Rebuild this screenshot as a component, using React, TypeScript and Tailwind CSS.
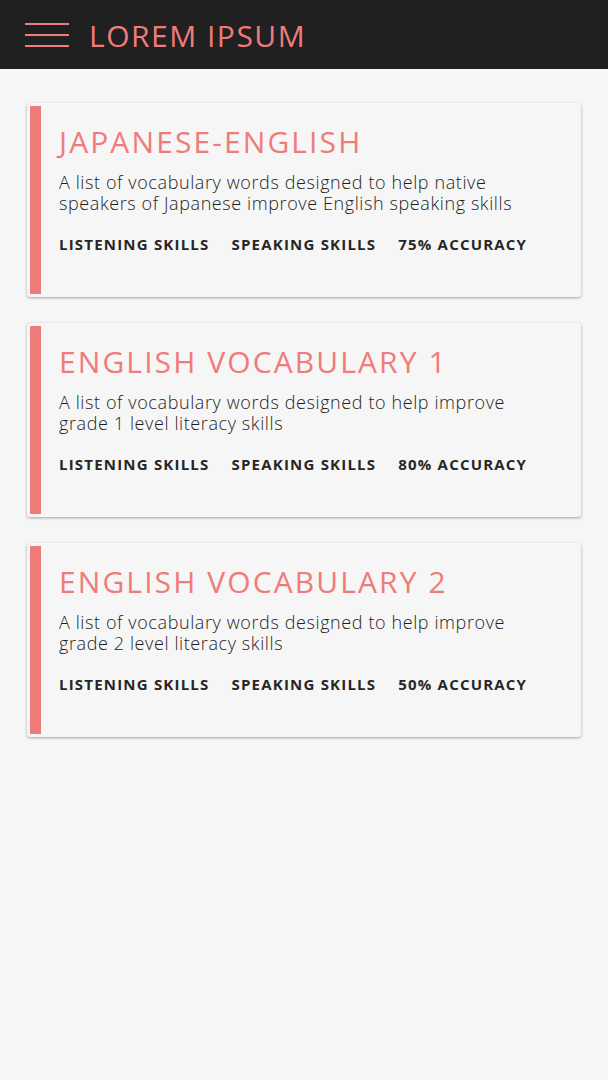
import React from 'react'

interface Course {
  title: string
  description: string
  accuracy: string
}

const courses: Course[] = [
  {
    title: 'JAPANESE-ENGLISH',
    description: 'A list of vocabulary words designed to help native speakers of Japanese improve English speaking skills',
    accuracy: '75% ACCURACY',
  },
  {
    title: 'ENGLISH VOCABULARY 1',
    description: 'A list of vocabulary words designed to help improve grade 1 level literacy skills',
    accuracy: '80% ACCURACY',
  },
  {
    title: 'ENGLISH VOCABULARY 2',
    description: 'A list of vocabulary words designed to help improve grade 2 level literacy skills',
    accuracy: '50% ACCURACY',
  },
]

const font = { fontFamily: '"Open Sans", "DejaVu Sans", sans-serif' }

const CourseCard = ({ course }: { course: Course }) => (
  <div className="flex h-[194px] rounded-[3px] bg-[#f6f6f6] p-[3px] shadow-[0_1px_3px_rgba(0,0,0,0.35)]">
    <div className="w-[11px] shrink-0 bg-[#ef7b7b]" />
    <div className="flex-1 pl-[18px] pr-[28px] pt-[18px]">
      <h2 className="text-[30px] leading-[36px] tracking-[2.1px] text-[#ef7b7b]">{course.title}</h2>
      <p className="mt-[12px] text-[18px] font-light leading-[21px] tracking-[0.6px] text-[#1e1e1e]">{course.description}</p>
      <div className="mt-[20px] flex gap-[22px] text-[15px] font-bold leading-[20px] tracking-[1.2px] text-[#262626]">
        <span>LISTENING SKILLS</span>
        <span>SPEAKING SKILLS</span>
        <span>{course.accuracy}</span>
      </div>
    </div>
  </div>
)

export default function App() {
  return (
    <div className="min-h-[1080px] bg-[#f6f6f6]" style={font}>
      <header className="flex h-[69px] items-center bg-[#202020] pl-[25px]">
        <div className="flex w-[44px] flex-col gap-[9px]">
          <span className="block h-[2px] bg-[#ef7b7b]" />
          <span className="block h-[2px] bg-[#ef7b7b]" />
          <span className="block h-[2px] bg-[#ef7b7b]" />
        </div>
        <h1 className="ml-[20px] mt-[2px] text-[30px] leading-none tracking-[1.5px] text-[#ef7b7b]">LOREM IPSUM</h1>
      </header>
      <main className="flex flex-col gap-[26px] px-[27px] pt-[34px]">
        {courses.map((c) => (
          <CourseCard key={c.title} course={c} />
        ))}
      </main>
    </div>
  )
}
